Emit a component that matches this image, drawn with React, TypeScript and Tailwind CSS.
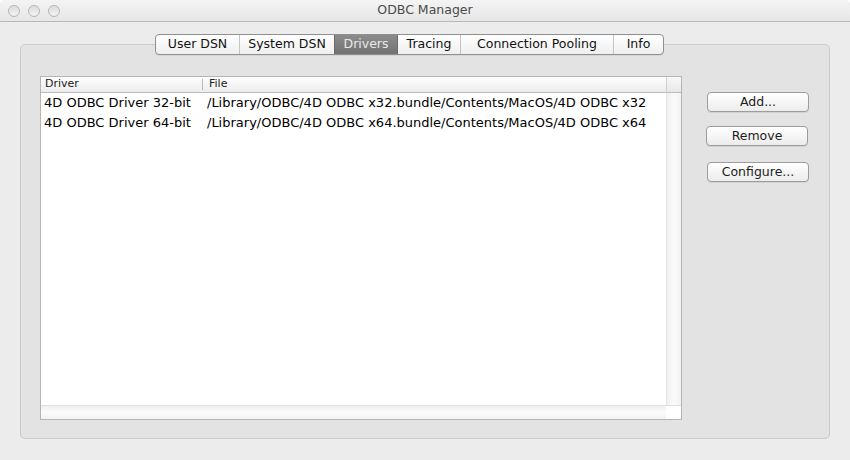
import React from "react";

const tabs = [
  { label: "User DSN", w: "w-[83px]" },
  { label: "System DSN", w: "w-[95px]" },
  { label: "Drivers", w: "w-[64px]", active: true },
  { label: "Tracing", w: "w-[62px]" },
  { label: "Connection Pooling", w: "w-[153px]" },
  { label: "Info", w: "w-[50px]" },
];

const rows = [
  ["4D ODBC Driver 32-bit", "/Library/ODBC/4D ODBC x32.bundle/Contents/MacOS/4D ODBC x32"],
  ["4D ODBC Driver 64-bit", "/Library/ODBC/4D ODBC x64.bundle/Contents/MacOS/4D ODBC x64"],
];

function Button({ label, className }: { label: string; className?: string }) {
  return (
    <div
      className={
        "w-[102px] h-[20px] rounded-[4px] border border-[#9c9c9c] bg-gradient-to-b from-[#ffffff] to-[#ececec] shadow-[0_1px_0_rgba(0,0,0,0.08)] flex items-center justify-center text-[12.5px] text-[#1c1c1c] " +
        (className ?? "")
      }
    >
      {label}
    </div>
  );
}

export default function App() {
  return (
    <div className="w-[850px] h-[460px] bg-[#ececec] flex flex-col font-['DejaVu_Sans',sans-serif] overflow-hidden rounded-t-[5px]">
      {/* Title bar */}
      <div className="relative h-[22px] shrink-0 bg-gradient-to-b from-[#f4f4f4] to-[#e6e6e6] border-b border-[#b8b8b8] flex items-center justify-center">
        <div className="absolute left-[8px] top-[5px] flex gap-[8px]">
          {[0, 1, 2].map((i) => (
            <div
              key={i}
              className="w-[12px] h-[12px] rounded-full border border-[#b5b5b5] bg-gradient-to-b from-[#dcdcdc] to-[#f4f4f4]"
            />
          ))}
        </div>
        <span className="text-[12.5px] text-[#4a4a4a]">ODBC Manager</span>
      </div>

      {/* Body */}
      <div className="flex flex-col px-[20px] pt-[12px]">
        {/* Tabs */}
        <div className="relative z-10 ml-[135px] flex h-[21px] w-fit rounded-[4px] border border-[#8f8f8f] bg-gradient-to-b from-[#ffffff] to-[#efefef] overflow-hidden shadow-[0_1px_0_rgba(0,0,0,0.06)]">
          {tabs.map((t, i) => (
            <div
              key={t.label}
              className={
                "h-full flex items-center justify-center text-[12.5px] " +
                t.w +
                " " +
                (t.active
                  ? "bg-gradient-to-b from-[#8c8c8c] to-[#727272] text-[#e9e9e9] border-x border-[#6a6a6a]"
                  : "text-[#111]") +
                (i > 0 && !t.active && !tabs[i - 1].active ? " border-l border-[#c4c4c4]" : "")
              }
            >
              {t.label}
            </div>
          ))}
        </div>

        {/* Tab box */}
        <div className="-mt-[11px] h-[395px] rounded-[5px] border border-[#cacaca] bg-[#e3e3e3] flex pl-[19px] pt-[31px]">
          {/* Table */}
          <div className="w-[642px] h-[344px] border border-[#b5b5b5] bg-white flex flex-col">
            {/* Header */}
            <div className="h-[16px] shrink-0 flex border-b border-[#bcbcbc] bg-gradient-to-b from-[#ffffff] to-[#ececec] text-[11px] text-[#222]">
              <div className="w-[161px] pl-[4px] flex items-center">Driver</div>
              <div className="flex-1 flex items-center">
                <div className="w-px h-[11px] bg-[#b8b8b8]" />
                <span className="pl-[6px]">File</span>
              </div>
              <div className="w-[15px] border-l border-[#cfcfcf] bg-gradient-to-b from-[#f8f8f8] to-[#e8e8e8]" />
            </div>
            {/* Body */}
            <div className="flex-1 flex min-h-0">
              <div className="flex-1 flex flex-col">
                {rows.map(([a, b]) => (
                  <div key={a} className="h-[20px] flex items-center text-[13px] text-black">
                    <div className="w-[161px] pl-[3px] whitespace-nowrap">{a}</div>
                    <div className="pl-[5px] whitespace-nowrap">{b}</div>
                  </div>
                ))}
              </div>
              <div className="w-[15px] border-l border-[#e6e6e6] bg-gradient-to-r from-[#f0f0f0] via-[#fbfbfb] to-[#f2f2f2]" />
            </div>
            {/* Horizontal scrollbar */}
            <div className="h-[14px] shrink-0 flex border-t border-[#e0e0e0]">
              <div className="flex-1 bg-gradient-to-b from-[#f0f0f0] via-[#fbfbfb] to-[#f2f2f2]" />
              <div className="w-[15px] bg-white" />
            </div>
          </div>

          {/* Buttons */}
          <div className="flex flex-col pl-[24px] pt-[16px]">
            <Button label="Add..." className="ml-[1px]" />
            <Button label="Remove" className="mt-[14px]" />
            <Button label="Configure..." className="mt-[16px] ml-[1px]" />
          </div>
        </div>
      </div>
    </div>
  );
}
